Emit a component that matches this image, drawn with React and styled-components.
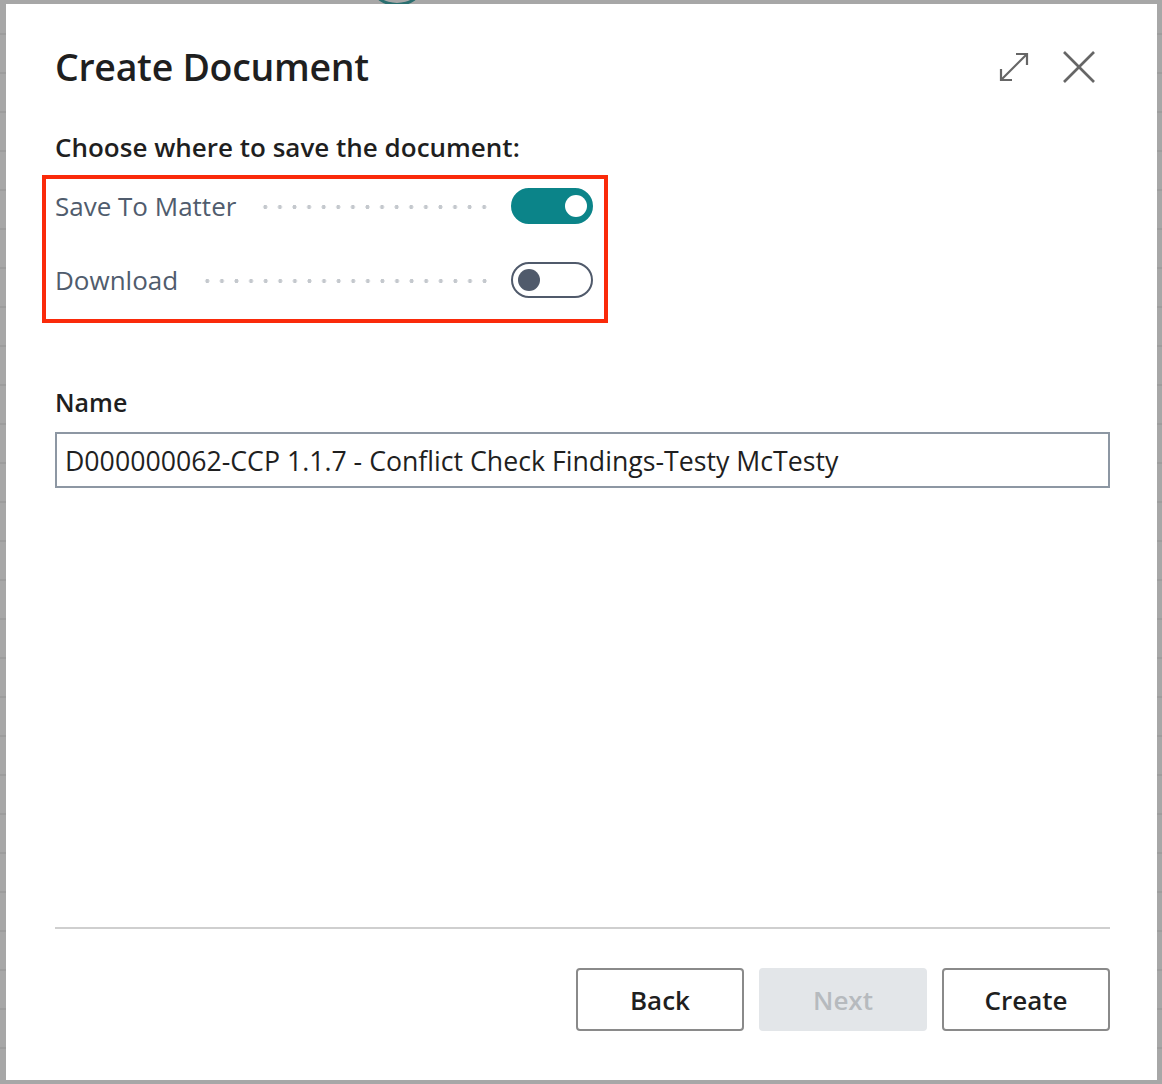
import React, { useState } from 'react';
import styled, { createGlobalStyle } from 'styled-components';

const GlobalStyle = createGlobalStyle`
  html, body {
    margin: 0;
    padding: 0;
    background: #a7a7a7;
  }
  * {
    box-sizing: border-box;
  }
  body {
    font-family: "Open Sans", "Noto Sans", "Liberation Sans", sans-serif;
    color: #212121;
  }
`;

const Screen = styled.div`
  position: relative;
  width: 1162px;
  height: 1084px;
  overflow: hidden;
  padding: 4px 5px 4px 6px;
  background-color: #a7a7a7;
  background-image: repeating-linear-gradient(
    to bottom,
    transparent 0px,
    transparent 37px,
    #9d9d9d 37px,
    #9d9d9d 39px
  );
  background-position: 0 -4px;
`;

const Avatar = styled.div`
  position: absolute;
  left: 372px;
  top: -30px;
  width: 50px;
  height: 36px;
  border-radius: 50%;
  border: 3px solid #2b6f70;
`;

const Dialog = styled.div`
  position: relative;
  display: flex;
  flex-direction: column;
  width: 100%;
  height: 100%;
  background: #ffffff;
  padding: 34px 47px 49px 49px;
`;

const Header = styled.div`
  display: flex;
  align-items: center;
  justify-content: space-between;
`;

const Title = styled.h1`
  margin: 0;
  font-size: 37.5px;
  font-weight: 600;
  line-height: 58px;
  color: #1f1f1f;
  letter-spacing: -0.3px;
`;

const HeaderActions = styled.div`
  display: flex;
  align-items: center;
  gap: 34px;
  padding-right: 15px;
`;

const IconButton = styled.button`
  display: flex;
  align-items: center;
  justify-content: center;
  padding: 0;
  border: none;
  background: none;
  cursor: pointer;
  color: #666666;
`;

const Subheading = styled.div`
  margin-top: 34px;
  font-size: 26px;
  font-weight: 600;
  line-height: 34px;
  color: #1f1f1f;
`;

const Highlight = styled.div`
  margin: 11px 0 0 -13px;
  width: 566px;
  border: 4px solid #fa2a0a;
  padding: 5px 11px 17px 9px;
  display: flex;
  flex-direction: column;
  gap: 30px;
`;

const OptionRow = styled.div`
  display: flex;
  align-items: center;
  height: 44px;
`;

const OptionLabel = styled.span`
  font-size: 26px;
  color: #505c6d;
  white-space: nowrap;
`;

const Leader = styled.span`
  flex: 1;
  height: 4px;
  margin: 2px 20px 0 22px;
  background-image: radial-gradient(circle, #c4c8cd 1.8px, transparent 2.2px);
  background-size: 14.6px 4px;
  background-repeat: repeat-x;
`;

const Track = styled.span`
  position: relative;
  display: inline-block;
  flex-shrink: 0;
  width: 82px;
  height: 36px;
  border-radius: 18px;
  border: 2px solid ${p => (p.on ? '#0b8489' : '#505a6b')};
  background: ${p => (p.on ? '#0b8489' : '#ffffff')};
  cursor: pointer;
`;

const Knob = styled.span`
  position: absolute;
  top: 50%;
  left: ${p => (p.on ? '52px' : '5px')};
  width: 22px;
  height: 22px;
  margin-top: -11px;
  border-radius: 50%;
  background: ${p => (p.on ? '#ffffff' : '#505a6b')};
`;

const FieldLabel = styled.label`
  display: block;
  margin-top: 62px;
  font-size: 25px;
  font-weight: 600;
  line-height: 34px;
  color: #1f1f1f;
`;

const TextInput = styled.input`
  display: block;
  width: 100%;
  height: 56px;
  margin-top: 13px;
  padding: 0 8px;
  border: 2px solid #8d97a3;
  border-radius: 0;
  font-family: inherit;
  font-size: 26.7px;
  color: #1f1f1f;
  outline: none;
`;

const Spacer = styled.div`
  flex: 1;
`;

const Divider = styled.hr`
  margin: 0;
  border: none;
  border-top: 2px solid #cfcfcf;
`;

const Footer = styled.div`
  display: flex;
  justify-content: flex-end;
  gap: 15px;
  margin-top: 39px;
`;

const Button = styled.button`
  width: 168px;
  height: 63px;
  border-radius: 4px;
  border: 2px solid ${p => (p.disabled ? '#e3e6e9' : '#8a8a8a')};
  background: ${p => (p.disabled ? '#e3e6e9' : '#ffffff')};
  color: ${p => (p.disabled ? '#b6babe' : '#1f1f1f')};
  font-family: inherit;
  font-size: 26px;
  font-weight: 600;
  cursor: ${p => (p.disabled ? 'default' : 'pointer')};
`;

const ExpandIcon = () => (
  <svg width="30" height="30" viewBox="0 0 30 30" fill="none" stroke="currentColor" strokeWidth="2.2">
    <path d="M2 28 L28 2" />
    <path d="M17 2 H28 V13" />
    <path d="M2 17 V28 H13" />
  </svg>
);

const CloseIcon = () => (
  <svg width="32" height="32" viewBox="0 0 32 32" fill="none" stroke="currentColor" strokeWidth="2.6">
    <path d="M1 1 L31 31" />
    <path d="M31 1 L1 31" />
  </svg>
);

const Toggle = ({ on, onClick }) => (
  <Track on={on ? 1 : 0} onClick={onClick}>
    <Knob on={on ? 1 : 0} />
  </Track>
);

const App = () => {
  const [saveToMatter, setSaveToMatter] = useState(true);
  const [download, setDownload] = useState(false);
  const [name, setName] = useState(
    'D000000062-CCP 1.1.7 - Conflict Check Findings-Testy McTesty'
  );

  return (
    <>
      <GlobalStyle />
      <Screen>
        <Avatar />
        <Dialog>
          <Header>
            <Title>Create Document</Title>
            <HeaderActions>
              <IconButton aria-label="Expand">
                <ExpandIcon />
              </IconButton>
              <IconButton aria-label="Close">
                <CloseIcon />
              </IconButton>
            </HeaderActions>
          </Header>

          <Subheading>Choose where to save the document:</Subheading>

          <Highlight>
            <OptionRow>
              <OptionLabel>Save To Matter</OptionLabel>
              <Leader />
              <Toggle on={saveToMatter} onClick={() => setSaveToMatter(!saveToMatter)} />
            </OptionRow>
            <OptionRow>
              <OptionLabel>Download</OptionLabel>
              <Leader />
              <Toggle on={download} onClick={() => setDownload(!download)} />
            </OptionRow>
          </Highlight>

          <FieldLabel htmlFor="doc-name">Name</FieldLabel>
          <TextInput id="doc-name" value={name} onChange={e => setName(e.target.value)} />

          <Spacer />
          <Divider />
          <Footer>
            <Button>Back</Button>
            <Button disabled>Next</Button>
            <Button>Create</Button>
          </Footer>
        </Dialog>
      </Screen>
    </>
  );
};

export default App;
